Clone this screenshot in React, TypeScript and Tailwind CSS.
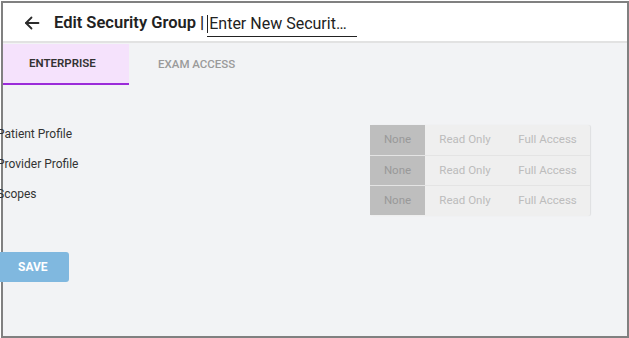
const rows = ["Patient Profile", "Provider Profile", "Scopes"];

function BackArrow() {
  return (
    <svg width="16" height="16" viewBox="0 0 16 16" fill="none" stroke="#2b2b2b" strokeWidth="1.8" strokeLinecap="round" strokeLinejoin="round">
      <path d="M14.5 8H2" />
      <path d="M7.5 2.5L2 8l5.5 5.5" />
    </svg>
  );
}

function AccessToggle() {
  return (
    <div className="flex flex-col bg-[#efefef] rounded-[2px] shadow-[1px_0_1px_rgba(0,0,0,0.08)] w-[220px]">
      {[0, 1, 2].map((i) => (
        <div key={i} className={`flex h-[30px] text-[11.5px] ${i > 0 ? "border-t border-[#e4e4e4]" : ""}`}>
          <div className="w-[55px] bg-[#bebebe] text-[#999] flex items-center justify-center">None</div>
          <div className="w-[80px] text-[#bcbcbc] flex items-center justify-center">Read Only</div>
          <div className="flex-1 text-[#bcbcbc] flex items-center justify-center">Full Access</div>
        </div>
      ))}
    </div>
  );
}

export default function App() {
  return (
    <div className="w-[629px] h-[338px] bg-white pl-px pt-px font-['Roboto',sans-serif]">
      <div className="w-[628px] h-[337px] border-2 border-[#808080] flex flex-col bg-[#f2f3f5]">
        <header className="h-[40px] shrink-0 bg-white border-b-2 border-[#e2e2e2] flex items-center pl-[21px] pt-[2px]">
          <BackArrow />
          <span className="ml-[14px] text-[16.5px] font-semibold text-[#222]">Edit Security Group |</span>
          <div className="ml-[3px] relative w-[150px] h-[24px] flex items-center border-b-[1.5px] border-[#222] mt-[3px]">
            <span className="w-px h-[18px] bg-[#222] mr-[1px]" />
            <span className="text-[16px] text-[#222] leading-none">Enter New Securit…</span>
          </div>
        </header>
        <nav className="h-[41px] shrink-0 flex mt-px">
          <div className="w-[126px] bg-[#f5e2fc] border-b-2 border-[#9b2bd9] pl-[26px] pt-px flex items-center text-[11.5px] font-semibold text-[#333]">
            ENTERPRISE
          </div>
          <div className="pl-[29px] pt-px flex items-center text-[11.5px] font-medium text-[#9a9a9a]">EXAM ACCESS</div>
        </nav>
        <main className="ml-[-6px] pt-[40px] flex flex-col">
          <div className="flex">
            <div className="w-[373px] flex flex-col pt-px">
              {rows.map((r) => (
                <div key={r} className="h-[30px] text-[12px] leading-[16px] text-[#333]">
                  {r}
                </div>
              ))}
            </div>
            <AccessToggle />
          </div>
          <button className="mt-[36px] w-[72px] h-[30px] rounded-[3px] bg-[#80b8df] text-white text-[12px] font-bold text-left pl-[21px]">
            SAVE
          </button>
        </main>
      </div>
    </div>
  );
}
